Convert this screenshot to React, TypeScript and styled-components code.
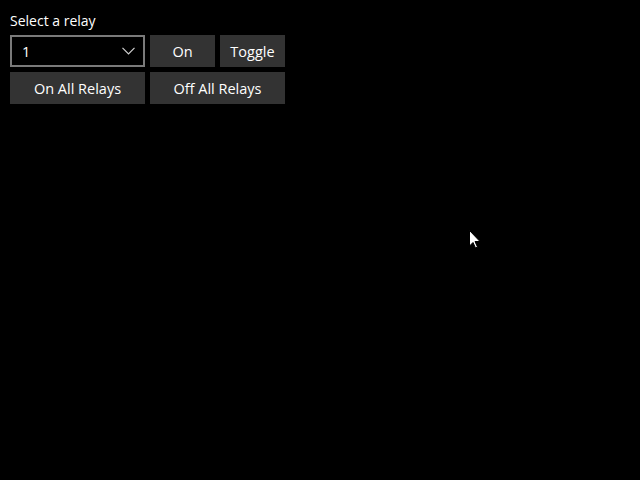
import React from "react";
import styled, { createGlobalStyle } from "styled-components";

const Global = createGlobalStyle`
  html, body { margin: 0; padding: 0; background: #000; }
  body { width: 640px; height: 480px; overflow: hidden; font-family: "Segoe UI", "Open Sans", "Noto Sans", sans-serif; color: #fff; }
`;

const Page = styled.div`
  position: relative;
  width: 640px;
  height: 480px;
  padding: 11px 10px 10px;
  box-sizing: border-box;
`;

const Label = styled.div`
  font-size: 14px;
  line-height: 20px;
  margin: 0 0 4px 0;
`;

const Grid = styled.div`
  display: grid;
  grid-template-columns: 135px 65px 65px;
  grid-auto-rows: 32px;
  gap: 5px;
`;

const Combo = styled.div`
  box-sizing: border-box;
  border: 2px solid #7a7a7a;
  display: flex;
  align-items: center;
  justify-content: space-between;
  padding: 0 8px 0 10px;
  font-size: 14.5px;
`;

const Button = styled.button<{ $span?: number }>`
  grid-column: span ${(p) => p.$span ?? 1};
  background: #333333;
  border: none;
  color: #fff;
  font-family: inherit;
  font-size: 14.5px;
  padding: 0;
  margin: 0;
`;

const Cursor = styled.svg`
  position: absolute;
  left: 469px;
  top: 230px;
`;

export default function App() {
  return (
    <Page>
      <Global />
      <Label>Select a relay</Label>
      <Grid>
        <Combo>
          <span>1</span>
          <svg width="13" height="8" viewBox="0 0 13 8">
            <path d="M0.5 0.8 L6.5 6.8 L12.5 0.8" stroke="#d0d0d0" strokeWidth="1.2" fill="none" />
          </svg>
        </Combo>
        <Button>On</Button>
        <Button>Toggle</Button>
        <Button $span={1}>On All Relays</Button>
        <Button $span={2}>Off All Relays</Button>
      </Grid>
      <Cursor width="12" height="19" viewBox="0 0 12 19">
        <path d="M0.5 0.5 L0.5 16 L4 12.5 L6.5 18 L8.5 17 L6 11.5 L11 11.5 Z" fill="#fff" stroke="#000" strokeWidth="1" />
      </Cursor>
    </Page>
  );
}
